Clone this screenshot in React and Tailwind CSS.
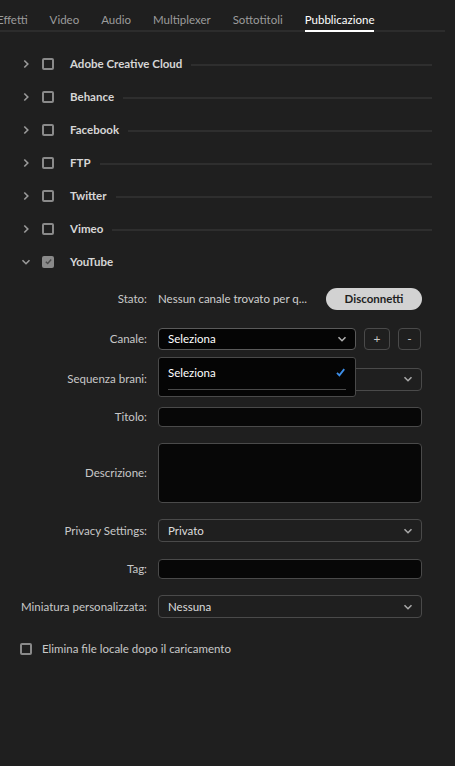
import React, { useState } from "react";

const font = { fontFamily: "Lato, 'Liberation Sans', sans-serif" };

const tabs = ["Effetti", "Video", "Audio", "Multiplexer", "Sottotitoli", "Pubblicazione"];
const servizi = ["Adobe Creative Cloud", "Behance", "Facebook", "FTP", "Twitter", "Vimeo"];

function Chevron({ down, className = "" }) {
  return (
    <svg width="10" height="10" viewBox="0 0 10 10" className={className}>
      {down ? (
        <path d="M1.5 3.2 L5 6.7 L8.5 3.2" fill="none" stroke="currentColor" strokeWidth="1.6" />
      ) : (
        <path d="M3.3 1.5 L6.8 5 L3.3 8.5" fill="none" stroke="currentColor" strokeWidth="1.6" />
      )}
    </svg>
  );
}

function Box({ checked }) {
  return checked ? (
    <div className="w-[12px] h-[12px] rounded-[2px] bg-[#8a8a8a] flex items-center justify-center">
      <svg width="9" height="9" viewBox="0 0 10 10">
        <path d="M2 5.2 L4.1 7.2 L8 2.8" fill="none" stroke="#4a4a4a" strokeWidth="1.6" />
      </svg>
    </div>
  ) : (
    <div className="w-[12px] h-[12px] rounded-[2px] border-2 border-[#8a8a8a]" />
  );
}

function Header({ nome, aperto, checked }) {
  return (
    <div className="h-[33px] flex items-center">
      <div className="w-[21px]" />
      <Chevron down={aperto} className="text-[#9a9a9a]" />
      <div className="w-[11px]" />
      <Box checked={checked} />
      <span className="ml-[16px] text-[11.5px] font-bold text-[#d6d6d6]">{nome}</span>
      {!aperto && <div className="flex-1 ml-[9px] mr-[23px] h-[2px] bg-[#2e2e2e] mt-[3px]" />}
    </div>
  );
}

function Select({ value, className = "" }) {
  return (
    <div className={"h-[23px] rounded-[4px] border border-[#4a4a4a] bg-[#1f1f1f] flex items-center justify-between pl-[9px] pr-[8px] text-[11.5px] text-[#dcdcdc] " + className}>
      <span>{value}</span>
      <Chevron down className="text-[#a8a8a8]" />
    </div>
  );
}

function Row({ label, children, alto = "h-[23px]" }) {
  return (
    <div className={"flex items-center " + alto}>
      <div className="w-[148px] pr-[1px] text-right text-[11.5px] text-[#c8c8c8] shrink-0">{label}</div>
      <div className="ml-[10px] w-[264px]">{children}</div>
    </div>
  );
}

export default function App() {
  const [elimina, setElimina] = useState(false);

  return (
    <div className="w-[455px] h-[766px] bg-[#1f1f1f] overflow-hidden" style={font}>
      <div className="h-[32px] flex items-end border-b-2 border-[#2c2c2c] mr-[10px]">
        <div className="flex ml-[-3px] gap-[22px]">
          {tabs.map((t) => (
            <div
              key={t}
              className={
                "h-[22px] flex items-center text-[11.5px] border-b-2 mb-[-2px] " +
                (t === "Pubblicazione" ? "text-white border-white" : "text-[#9c9c9c] border-transparent")
              }
            >
              {t}
            </div>
          ))}
        </div>
      </div>

      <div className="pt-[15px]">
        {servizi.map((s) => (
          <Header key={s} nome={s} />
        ))}
        <Header nome="YouTube" aperto checked />
      </div>

      <div className="mt-[10px] flex flex-col">
        <Row label="Stato:" alto="h-[22px]">
          <div className="flex items-center justify-between">
            <span className="text-[11.5px] text-[#cfcfcf]">Nessun canale trovato per q...</span>
            <button className="h-[22px] w-[96px] rounded-full bg-[#d2d2d2] text-[11.5px] font-bold text-[#1f1f1f]">
              Disconnetti
            </button>
          </div>
        </Row>

        <div className="mt-[18px] relative z-10">
          <Row label="Canale:" alto="h-[22px]">
            <div className="flex items-center gap-[8px]">
              <div className="relative w-[198px]">
                <div className="h-[22px] rounded-[4px] border border-[#5a5a5a] bg-[#050505] flex items-center justify-between pl-[9px] pr-[8px] text-[11.5px] text-white">
                  <span>Seleziona</span>
                  <Chevron down className="text-[#b0b0b0]" />
                </div>
                <div className="absolute left-0 top-[29px] w-[198px] h-[40px] rounded-[3px] border border-[#4a4a4a] bg-[#050505] px-[9px] pt-[6px]">
                  <div className="flex items-center justify-between text-[11.5px] text-white">
                    <span>Seleziona</span>
                    <svg width="11" height="11" viewBox="0 0 10 10">
                      <path d="M1.8 5.4 L4 7.6 L8.4 2" fill="none" stroke="#3d8ee8" strokeWidth="1.7" />
                    </svg>
                  </div>
                  <div className="mt-[8px] h-px bg-[#4a4a4a]" />
                </div>
              </div>
              <div className="w-[26px] h-[22px] rounded-[4px] border border-[#4a4a4a] flex items-center justify-center text-[12px] text-[#c8c8c8]">+</div>
              <div className="w-[23px] h-[22px] rounded-[4px] border border-[#4a4a4a] flex items-center justify-center text-[12px] text-[#c8c8c8]">-</div>
            </div>
          </Row>
        </div>

        <div className="mt-[18px]">
          <Row label="Sequenza brani:" alto="h-[22px]">
            <Select value="" className="h-[22px]" />
          </Row>
        </div>

        <div className="mt-[17px]">
          <Row label="Titolo:" alto="h-[20px]">
            <div className="h-[20px] rounded-[4px] border border-[#4a4a4a] bg-[#070707]" />
          </Row>
        </div>

        <div className="mt-[16px]">
          <Row label="Descrizione:" alto="h-[60px]">
            <div className="h-[60px] rounded-[4px] border border-[#4a4a4a] bg-[#070707]" />
          </Row>
        </div>

        <div className="mt-[16px]">
          <Row label="Privacy Settings:">
            <Select value="Privato" />
          </Row>
        </div>

        <div className="mt-[17px]">
          <Row label="Tag:" alto="h-[20px]">
            <div className="h-[20px] rounded-[4px] border border-[#4a4a4a] bg-[#070707]" />
          </Row>
        </div>

        <div className="mt-[16px]">
          <Row label="Miniatura personalizzata:">
            <Select value="Nessuna" />
          </Row>
        </div>

        <label className="mt-[22px] ml-[20px] flex items-center gap-[10px] cursor-pointer" onClick={() => setElimina(!elimina)}>
          <Box checked={elimina} />
          <span className="text-[11.5px] text-[#c8c8c8]">Elimina file locale dopo il caricamento</span>
        </label>
      </div>
    </div>
  );
}
